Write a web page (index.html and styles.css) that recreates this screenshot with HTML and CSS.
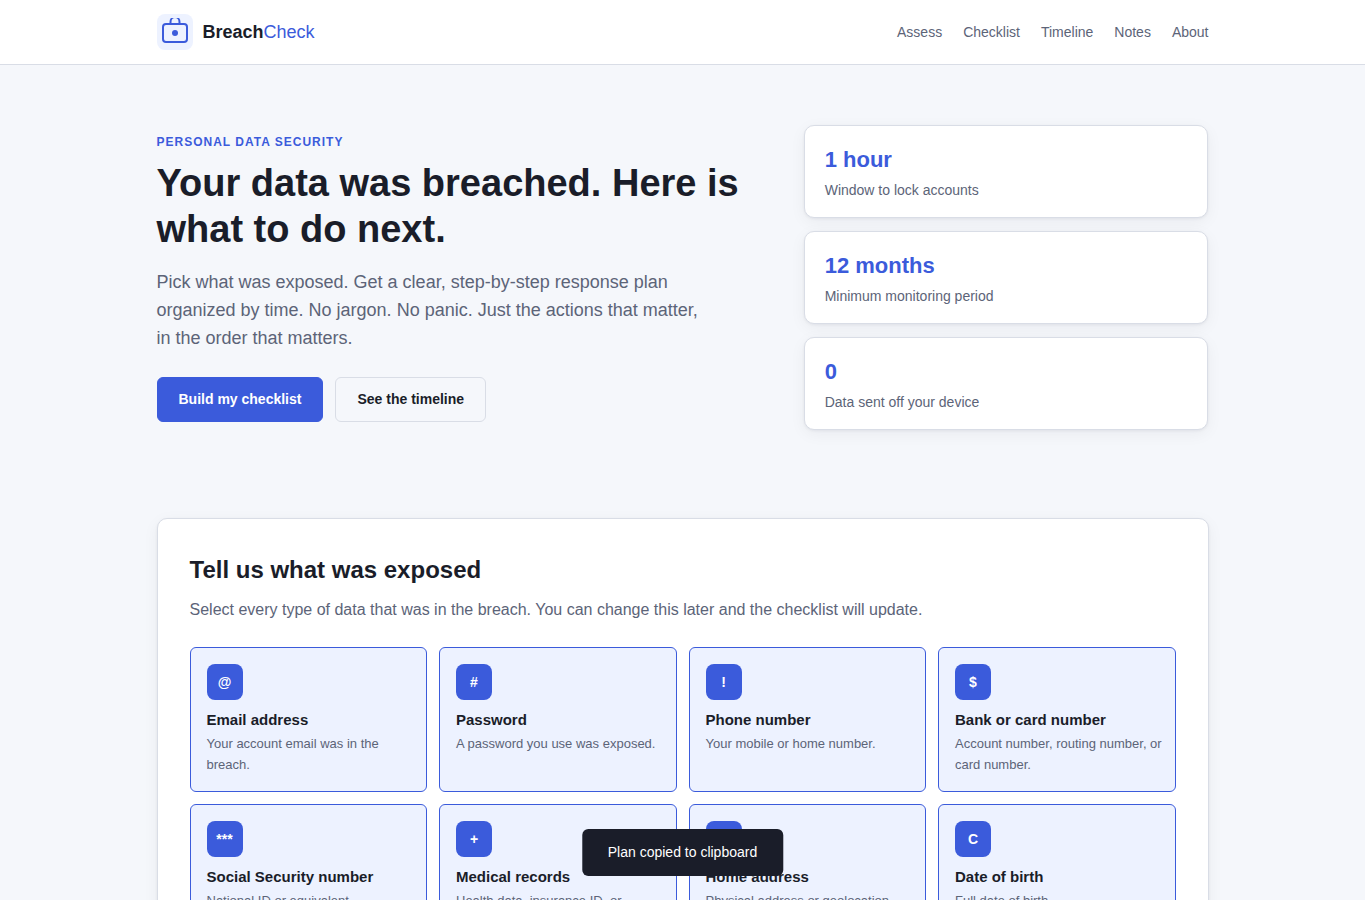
FILE: index.html
```html
<!DOCTYPE html>
<html lang="en">
<head>
    <meta charset="UTF-8">
    <meta name="viewport" content="width=device-width, initial-scale=1.0">
    <title>BreachCheck</title>
    <link rel="stylesheet" href="styles.css">
</head>
<body>

    <header class="site-header">
        <div class="container header-inner">
            <a class="brand" href="#">
                <span class="brand-mark">
                    <svg width="28" height="28" viewBox="0 0 28 28" fill="none" stroke="currentColor" stroke-width="2" aria-hidden="true">
                        <rect x="2" y="6" width="24" height="18" rx="3"/>
                        <path d="M9.5 6V4a4.5 5 0 0 1 9 0v2"/>
                        <circle cx="14" cy="15" r="3" fill="currentColor" stroke="none"/>
                    </svg>
                </span>
                <span class="brand-name">Breach<span class="brand-accent">Check</span></span>
            </a>
            <nav class="site-nav">
                <a href="#assess">Assess</a>
                <a href="#checklist">Checklist</a>
                <a href="#timeline">Timeline</a>
                <a href="#notes">Notes</a>
                <a href="#about">About</a>
            </nav>
        </div>
    </header>

    <main class="container">
        <section class="hero">
            <div class="hero-copy">
                <p class="eyebrow">Personal data security</p>
                <h1>Your data was breached. Here is what to do next.</h1>
                <p class="lead">Pick what was exposed. Get a clear, step-by-step response plan organized by time. No jargon. No panic. Just the actions that matter, in the order that matters.</p>
                <div class="hero-actions">
                    <button type="button" class="btn btn-primary">Build my checklist</button>
                    <button type="button" class="btn btn-ghost">See the timeline</button>
                </div>
            </div>
            <div class="stats">
                <div class="stat">
                    <div class="stat-value">1 hour</div>
                    <div class="stat-label">Window to lock accounts</div>
                </div>
                <div class="stat">
                    <div class="stat-value">12 months</div>
                    <div class="stat-label">Minimum monitoring period</div>
                </div>
                <div class="stat">
                    <div class="stat-value">0</div>
                    <div class="stat-label">Data sent off your device</div>
                </div>
            </div>
        </section>

        <section class="panel" id="assess">
            <h2>Tell us what was exposed</h2>
            <p class="panel-intro">Select every type of data that was in the breach. You can change this later and the checklist will update.</p>
            <div class="type-grid">
                <button type="button" class="type-card" aria-pressed="true">
                    <span class="type-icon">@</span>
                    <span class="type-title">Email address</span>
                    <span class="type-desc">Your account email was in the breach.</span>
                </button>
                <button type="button" class="type-card" aria-pressed="true">
                    <span class="type-icon">#</span>
                    <span class="type-title">Password</span>
                    <span class="type-desc">A password you use was exposed.</span>
                </button>
                <button type="button" class="type-card" aria-pressed="true">
                    <span class="type-icon">!</span>
                    <span class="type-title">Phone number</span>
                    <span class="type-desc">Your mobile or home number.</span>
                </button>
                <button type="button" class="type-card" aria-pressed="true">
                    <span class="type-icon">$</span>
                    <span class="type-title">Bank or card number</span>
                    <span class="type-desc">Account number, routing number, or card number.</span>
                </button>
                <button type="button" class="type-card" aria-pressed="true">
                    <span class="type-icon">***</span>
                    <span class="type-title">Social Security number</span>
                    <span class="type-desc">National ID or equivalent.</span>
                </button>
                <button type="button" class="type-card" aria-pressed="true">
                    <span class="type-icon">+</span>
                    <span class="type-title">Medical records</span>
                    <span class="type-desc">Health data, insurance ID, or treatment history.</span>
                </button>
                <button type="button" class="type-card" aria-pressed="true">
                    <span class="type-icon">H</span>
                    <span class="type-title">Home address</span>
                    <span class="type-desc">Physical address or geolocation.</span>
                </button>
                <button type="button" class="type-card" aria-pressed="true">
                    <span class="type-icon">C</span>
                    <span class="type-title">Date of birth</span>
                    <span class="type-desc">Full date of birth.</span>
                </button>
            </div>
        </section>
    </main>

    <div class="toast" role="status">Plan copied to clipboard</div>

</body>
</html>
```

FILE: styles.css
```css
:root {
    --blue: #3b5bdb;
    --blue-soft: #edf2ff;
    --ink: #1a1d29;
    --muted: #5c6478;
    --line: #d9dde6;
    --bg: #f5f7fb;
    --shadow: 0 1px 3px rgba(20, 25, 40, 0.06), 0 4px 16px rgba(20, 25, 40, 0.05);
}

* {
    box-sizing: border-box;
}

body {
    margin: 0;
    background: var(--bg);
    color: var(--ink);
    font-family: "Liberation Sans", Arial, sans-serif;
    font-size: 16px;
    line-height: 26px;
}

h1, h2, p {
    margin: 0;
}

button {
    font-family: inherit;
    cursor: pointer;
}

.container {
    max-width: 1100px;
    margin: 0 auto;
    padding: 0 24px;
}

/* header */
.site-header {
    background: #fff;
    border-bottom: 1px solid var(--line);
}

.header-inner {
    display: flex;
    align-items: center;
    justify-content: space-between;
    padding-top: 14px;
    padding-bottom: 14px;
}

.brand {
    display: flex;
    align-items: center;
    gap: 10px;
    color: var(--ink);
    text-decoration: none;
}

.brand-mark {
    display: flex;
    padding: 4px;
    border-radius: 8px;
    background: var(--blue-soft);
    color: var(--blue);
}

.brand-name {
    font-size: 18px;
    font-weight: 700;
}

.brand-accent {
    color: var(--blue);
    font-weight: 400;
}

.site-nav {
    display: flex;
    gap: 21px;
}

.site-nav a {
    color: var(--muted);
    font-size: 14px;
    text-decoration: none;
}

/* hero */
.hero {
    display: grid;
    grid-template-columns: 3fr 2fr;
    gap: 40px;
    align-items: center;
    padding: 60px 0 88px;
}

.eyebrow {
    margin-bottom: 8px;
    color: var(--blue);
    font-size: 12px;
    font-weight: 700;
    letter-spacing: 1px;
    line-height: 19px;
    text-transform: uppercase;
}

h1 {
    font-size: 38px;
    line-height: 46px;
}

.lead {
    max-width: 560px;
    margin-top: 16px;
    color: var(--muted);
    font-size: 18px;
    line-height: 28px;
}

.hero-actions {
    display: flex;
    gap: 12px;
    margin-top: 25px;
}

.btn {
    padding: 10px 21px;
    border: 1px solid transparent;
    border-radius: 6px;
    font-size: 14px;
    font-weight: 700;
    line-height: 23px;
}

.btn-primary {
    background: var(--blue);
    border-color: var(--blue);
    color: #fff;
}

.btn-ghost {
    background: transparent;
    border-color: var(--line);
    color: var(--ink);
}

.stats {
    display: grid;
    gap: 13px;
}

.stat {
    padding: 16px 20px;
    background: #fff;
    border: 1px solid var(--line);
    border-radius: 10px;
    box-shadow: var(--shadow);
}

.stat-value {
    color: var(--blue);
    font-size: 22px;
    font-weight: 700;
    line-height: 36px;
}

.stat-label {
    margin-top: 2px;
    color: var(--muted);
    font-size: 14px;
    line-height: 21px;
}

/* exposure picker */
.panel {
    padding: 32px;
    background: #fff;
    border: 1px solid var(--line);
    border-radius: 10px;
    box-shadow: var(--shadow);
}

h2 {
    font-size: 24px;
    line-height: 38px;
}

.panel-intro {
    margin: 8px 0 24px;
    color: var(--muted);
}

.type-grid {
    display: grid;
    grid-template-columns: repeat(4, 1fr);
    gap: 12px;
}

.type-card {
    display: flex;
    flex-direction: column;
    align-items: flex-start;
    padding: 16px 12px 16px 16px;
    background: var(--blue-soft);
    border: 1px solid var(--blue);
    border-radius: 6px;
    color: var(--ink);
    text-align: left;
}

.type-icon {
    display: flex;
    align-items: center;
    justify-content: center;
    width: 36px;
    height: 36px;
    margin-bottom: 8px;
    border-radius: 8px;
    background: var(--blue);
    color: #fff;
    font-size: 14px;
    font-weight: 700;
}

.type-title {
    margin-bottom: 1px;
    font-size: 15px;
    font-weight: 700;
    line-height: 24px;
}

.type-desc {
    color: var(--muted);
    font-size: 13px;
    line-height: 21px;
}

.toast {
    position: fixed;
    bottom: 24px;
    left: 50%;
    transform: translateX(-50%);
    padding: 12px 26px;
    border-radius: 6px;
    background: var(--ink);
    color: #fff;
    font-size: 14px;
    line-height: 23px;
    white-space: nowrap;
}

@media (max-width: 860px) {
    .hero {
        grid-template-columns: 1fr;
    }

    .type-grid {
        grid-template-columns: repeat(2, 1fr);
    }
}
```
